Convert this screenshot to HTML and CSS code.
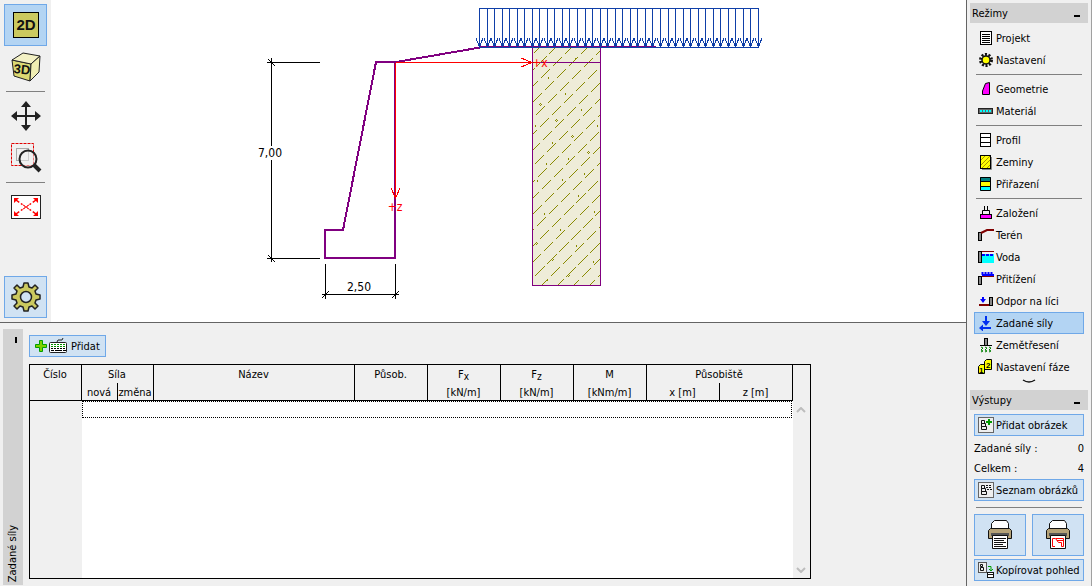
FILE: index.html
```html
<!DOCTYPE html>
<html lang="cs">
<head>
<meta charset="utf-8">
<title>Zadané síly</title>
<link rel="stylesheet" href="styles.css">
</head>
<body>
<main class="main">
  <section class="view">
    <div class="toolbar">
      <button class="tool active" aria-label="2D"><svg width="30" height="30"><rect x="2.500" y="2.500" width="25" height="25" fill="#cbc95f" stroke="#000"/><text class="icon-text" x="15" y="20" text-anchor="middle">2D</text></svg></button>
      <button class="tool" aria-label="3D"><svg width="34" height="34" stroke="#222" stroke-linejoin="round"><path d="M3 10L22 14L21 31L5 26Z" fill="#dcd973"/><path d="M3 10L14 3L31 6L22 14Z" fill="#f3f1c5"/><path d="M22 14L31 6L30 22L21 31Z" fill="#efedb2"/><text class="icon-text cube-text" x="13" y="24" text-anchor="middle" stroke="none" transform="rotate(6 13 20)">3D</text></svg></button>
      <hr class="tool-line">
      <button class="tool" aria-label="Posun"><svg width="30" height="30"><path d="M15 4V26M4 15H26" stroke="#222" stroke-width="2"/><path d="M15 0L20 6H10ZM15 30L20 24H10ZM0 15L6 10V20ZM30 15L24 10V20Z" fill="#222"/></svg></button>
      <button class="tool" aria-label="Lupa"><svg width="32" height="32" fill="none"><rect x="1.500" y="1.500" width="22" height="22" stroke="#e00000" stroke-dasharray="3 1"/><rect x="6.500" y="6.500" width="12" height="12" stroke="#aaa"/><circle cx="18" cy="17" r="8.500" fill="#f0f0f0" fill-opacity=".5" stroke="#222" stroke-width="2"/><path d="M24 23L30 29" stroke="#222" stroke-width="4"/></svg></button>
      <hr class="tool-line">
      <button class="tool" aria-label="Celý pohled"><svg width="30" height="24"><rect x=".5" y=".5" width="29" height="23" fill="#fff" stroke="#222"/><path d="M5 5L12 10M25 5L18 10M5 19L12 14M25 19L18 14" stroke="#f00" stroke-width="1.500" stroke-dasharray="4 2 2 2"/><path d="M3 3H8L3 8ZM27 3H22L27 8ZM3 21H8L3 16ZM27 21H22L27 16Z" fill="#f00"/><path d="M12 10l2 1v2l-2 1M18 10l-2 1v2l2 1M14 12h2" stroke="#f00" fill="none"/></svg></button>
      <button class="tool gear" aria-label="Nastavení zobrazení"><svg width="32" height="32" viewBox="-16 -16 32 32"><path d="M-3-10L-2-14H2L3-10L6-9L9-12L12-9L9-6L10-3L14-2V2L10 3L9 6L12 9L9 12L6 9L3 10L2 14H-2L-3 10L-6 9L-9 12L-12 9L-9 6L-10 3L-14 2V-2L-10-3L-9-6L-12-9L-9-12L-6-9Z" fill="#cbc95f" stroke="#222" stroke-width="1.500" stroke-linejoin="round"/><circle r="5.500" fill="#d0e2f3" stroke="#222" stroke-width="1.500"/></svg></button>
    </div>
    <svg class="canvas" viewBox="51 0 915 322" preserveAspectRatio="xMinYMin meet" shape-rendering="crispEdges" fill="none">
      <clipPath id="soil-clip"><rect x="533" y="48" width="67" height="237"/></clipPath>
      <rect x="532.500" y="47.500" width="68" height="238" fill="#eeecd8"/>
      <g clip-path="url(#soil-clip)"><g id="hatch" class="soil"></g></g>
      <path d="M532.500 47V285.500H600.500V47M532.500 62.500H600.500" stroke="#800080"/>
      <path d="M396 62L483 47H656M376 62H395V258H325V230H343Z" stroke="#800080" stroke-width="2"/>
      <path id="load" class="load"></path>
      <path d="M395.500 62.500H532M521 58L532 62.500L521 67M395.500 62.500V198M391 188L395.500 198L400 188" stroke="#f00"/>
      <path d="M271.500 58V146M271.500 160V262M267 62.500H320M267 258.500H320M268 59L275 66M268 255L275 262M325.500 264V299M395.500 264V299M322 294.500H399M322 298L329 291M392 298L399 291" stroke="#000"/>
      <g class="dims"><text x="270" y="157">7,00</text><text x="359" y="291">2,50</text></g>
      <g class="axes"><text x="540" y="67">+x</text><text x="395" y="211">+z</text></g>
    </svg>
  </section>

  <section class="panel">
    <div class="tab"><span class="tab-mark"></span><span class="tab-text">Zadané síly</span></div>
    <div class="work">
      <button class="btn add"><svg width="34" height="16"><path d="M5.500 2.500h3v4h4v3h-4v4h-3v-4h-4v-3h4Z" fill="#7fd000" stroke="#00a000"/><rect x="15.500" y="4.500" width="17" height="10" rx="1" fill="#fff" stroke="#222"/><path d="M17 6.500h15M17 8.500h15" stroke="#009000" stroke-dasharray="2 1"/><path d="M17 10.500h15" stroke="#000" stroke-dasharray="2 1"/><path d="M17 12.500h3m1 0h7m1 0h3" stroke="#000"/><path d="M23 4L24 2H28L29 0" fill="none" stroke="#222"/></svg>Přidat</button>
      <div class="grid">
        <table>
          <colgroup><col class="c-num"><col class="c-half"><col class="c-half"><col class="c-name"><col span="6" class="c-val"></colgroup>
          <thead>
            <tr><th rowspan="2">Číslo</th><th colspan="2" class="up">Síla</th><th rowspan="2">Název</th><th rowspan="2">Působ.</th><th class="up">F<sub>x</sub></th><th class="up">F<sub>z</sub></th><th class="up">M</th><th colspan="2" class="up">Působiště</th></tr>
            <tr><th>nová</th><th>změna</th><th>[kN/m]</th><th>[kN/m]</th><th>[kNm/m]</th><th>x [m]</th><th>z [m]</th></tr>
          </thead>
          <tbody>
            <tr class="cursor"><td class="num"></td><td colspan="9"><div class="focus"></div></td></tr>
            <tr><td class="num"></td><td colspan="9"></td></tr>
          </tbody>
        </table>
        <div class="scroll">
          <svg width="10" height="6"><path d="M1 5L5 1L9 5" /></svg>
          <svg width="10" height="6"><path d="M1 1L5 5L9 1" /></svg>
        </div>
      </div>
    </div>
  </section>
</main>

<aside class="side">
  <h2 class="head">Režimy<span class="min"></span></h2>
  <nav class="modes">
    <button class="mode"><svg width="16" height="16"><rect x="2.500" y="1.500" width="11" height="13" fill="#fff" stroke="#000"/><path d="M4 4.500h8M4 6.500h8M4 8.500h8M4 10.500h8M4 12.500h8" stroke="#000"/></svg>Projekt</button>
    <button class="mode"><svg width="16" height="16"><circle cx="8" cy="8" r="5.500" fill="none" stroke="#111" stroke-width="3" stroke-dasharray="2 1.460"/><circle cx="8" cy="8" r="4" fill="#ff0" stroke="#111" stroke-width="1.500"/></svg>Nastavení</button>
    <hr>
    <button class="mode"><svg width="16" height="16"><path d="M4.500 13.500V10L7.500 2.500L11.500 1.500V13.500Z" fill="#f0f" stroke="#000"/></svg>Geometrie</button>
    <button class="mode"><svg width="16" height="16"><rect x=".5" y="5.500" width="14" height="5" fill="#666" stroke="#222"/><path d="M2 8h12" stroke="#0ff" stroke-width="2" stroke-dasharray="2 1"/></svg>Materiál</button>
    <hr>
    <button class="mode"><svg width="16" height="16"><rect x="2.500" y="1.500" width="10" height="13" fill="#fff" stroke="#000"/><path d="M2 5.500h11M2 10.500h11" stroke="#000"/></svg>Profil</button>
    <button class="mode"><svg width="16" height="16"><path d="M4 15.500h9.500V3" fill="none" stroke="#888"/><rect x="2.500" y="1.500" width="10" height="13" fill="#ff0" stroke="#000"/><path d="M3 6L7 2M3 11L12 2M4 14L12 6M9 14L12 11" stroke="#a89000"/></svg>Zeminy</button>
    <button class="mode"><svg width="16" height="16"><rect x="2" y="1" width="11" height="5" fill="#008080"/><rect x="2" y="6" width="11" height="4" fill="#ff0"/><rect x="2" y="10" width="11" height="5" fill="#0ff"/><path d="M2.500 1.500h10v13h-10ZM2 5.500h11M2 10.500h11" fill="none" stroke="#000"/></svg>Přiřazení</button>
    <hr>
    <button class="mode"><svg width="16" height="16"><path d="M6.500 1V5.500H4.500V9M9.500 1V5.500H11.500V9M6 5.500h4" fill="none" stroke="#000"/><rect x="2.500" y="9.500" width="11" height="4" fill="#f0f" stroke="#000"/></svg>Založení</button>
    <button class="mode"><svg width="16" height="16"><rect x=".5" y="5.500" width="3" height="8" fill="#888" stroke="#000"/><path d="M3 6L9 3H16" fill="none" stroke="#800000" stroke-width="2"/></svg>Terén</button>
    <button class="mode"><svg width="16" height="16"><rect x="4" y="5" width="12" height="9" fill="#0ff"/><path d="M4 6h12" stroke="#00f" stroke-width="2" stroke-dasharray="3 1"/><path d="M3 2.500h13" stroke="#800000"/><rect x=".5" y="2.500" width="3" height="11" fill="#888" stroke="#000"/></svg>Voda</button>
    <button class="mode"><svg width="16" height="16"><path d="M4 4h12M4.500 1v3M7.500 1v3M10.500 1v3M13.500 1v3" stroke="#00f" stroke-width="2"/><path d="M3 5.500h13" stroke="#800000"/><rect x=".5" y="5.500" width="3" height="8" fill="#888" stroke="#000"/></svg>Přitížení</button>
    <button class="mode"><svg width="16" height="16"><path d="M5 4v4" stroke="#00f" stroke-width="2"/><path d="M2 6h6L5 10Z" fill="#00f"/><path d="M1 12h10" stroke="#800000" stroke-width="2"/><rect x="11.500" y="4.500" width="3" height="8" fill="#888" stroke="#000"/></svg>Odpor na líci</button>
    <button class="mode active"><svg width="16" height="16"><path d="M8 1v8M5 13h8" stroke="#0030f0" stroke-width="2"/><path d="M4 6h8L8 11ZM5 9.500v7L1 13Z" fill="#0030f0"/></svg>Zadané síly</button>
    <button class="mode"><svg width="16" height="16"><path d="M2 8.500h12" stroke="#000"/><rect x="6.500" y="1.500" width="3" height="7" fill="#888" stroke="#000"/><path d="M3 10l2 1-2 2 2 1-2 1M7 10l2 1-2 2 2 1-2 1M11 10l2 1-2 2 2 1-2 1" fill="none" stroke="#008000"/></svg>Zemětřesení</button>
    <button class="mode"><svg width="16" height="16"><path d="M.5 14.500v-7l2-2h4v9Z M6.500 10.500v-8l2-2h5v10Z" fill="#ff0" stroke="#000"/><text class="tiny" x="1" y="14">1</text><text class="tiny" x="8" y="9">2</text></svg>Nastavení fáze</button>
    <button class="more" aria-label="Další"><svg width="14" height="5"><path d="M1 1Q4 3 7 3Q10 3 13 1" fill="none" stroke="#111" stroke-width="1.500"/></svg></button>
  </nav>
  <h2 class="head">Výstupy<span class="min"></span></h2>
  <div class="outputs">
    <button class="btn"><svg width="16" height="16"><rect x=".5" y=".5" width="15" height="15" fill="#eee" stroke="#666"/><path d="M3.500 3.500h3v3h-3ZM3.500 6.500v3h4v-3h-4M3.500 9.500v3h5v-3h-5" fill="none" stroke="#111"/><path d="M11 2v6M8 5h6" stroke="#009a00" stroke-width="2"/></svg>Přidat obrázek</button>
    <div class="counts">
      <p class="count"><span>Zadané síly :</span><span>0</span></p>
      <p class="count"><span>Celkem :</span><span>4</span></p>
    </div>
    <button class="btn"><svg width="16" height="16"><rect x=".5" y=".5" width="15" height="15" fill="#eee" stroke="#666"/><path d="M3.500 3.500h3v3h-3ZM3.500 6.500v3h4v-3h-4M3.500 9.500v3h5v-3h-5" fill="none" stroke="#111"/><path d="M8 3.500h6M8 5.500h6M9 7.500h5" stroke="#111" stroke-dasharray="2 1"/></svg>Seznam obrázků</button>
    <hr>
    <div class="prints">
      <button class="btn print" aria-label="Tisk textu"><svg width="26" height="30"><path d="M4.500 10V3.500L7.500.5H19.500L21.500 3.500V10" fill="#fff" stroke="#111"/><path d="M3.500 8.500H22.500L24.500 10.500V18.500H1.500V10.500Z" fill="#b5a277" stroke="#111"/><path d="M4 14.500H22" stroke="#555" stroke-width="3"/><path d="M5.500 15.500H20.500V28.500H5.500Z" fill="#fff" stroke="#111"/><path d="M7 18.500h12M7 20.500h10M7 22.500h12M7 24.500h9M7 26.500h12" stroke="#111"/></svg></button>
      <button class="btn print" aria-label="Tisk obrázku"><svg width="26" height="30"><path d="M4.500 10V3.500L7.500.5H19.500L21.500 3.500V10" fill="#fff" stroke="#111"/><path d="M3.500 8.500H22.500L24.500 10.500V18.500H1.500V10.500Z" fill="#b5a277" stroke="#111"/><path d="M4 14.500H22" stroke="#555" stroke-width="3"/><path d="M5.500 15.500H20.500V28.500H5.500Z" fill="#fff" stroke="#111"/><path d="M10 18.500H7.500V26.500H10M10.500 18.500H18.500V26.500H16.500V22.500H13.500ZM12 20.500h6" fill="none" stroke="#f00"/></svg></button>
    </div>
    <button class="btn"><svg width="16" height="16"><rect x=".5" y=".5" width="8" height="10" fill="#eee" stroke="#555"/><path d="M2.500 2.500h2v2h-2ZM2.500 5.500h3v3h-3Z" fill="none" stroke="#111"/><path d="M10 4.500h3V9M11 7l2 2 2-2" fill="none" stroke="#009a00"/><rect x="9.500" y="10.500" width="6" height="5" fill="#fff" stroke="#111"/><path d="M9 12.500h7" stroke="#111"/></svg>Kopírovat pohled</button>
  </div>
</aside>
<script src="drawing.js"></script>
</body>
</html>
```
FILE: drawing.js
```js
// Surcharge arrows: evenly spaced, snapped to whole pixels.
var load = "M479 8.500H759M479 47.500H759";
for (var i = 0; i < 38; i++) {
  var x = Math.round(479 + i * 7.54) + 0.5;
  load += "M" + x + " 8V47M" + (x - 3.5) + " 38L" + x + " 47L" + (x + 3.5) + " 38";
}
document.getElementById("load").setAttribute("d", load);

// Soil hatch: dashed diagonals with scattered grains.
var hatch = "";
for (var y = 54; y < 370; y += 16) {
  hatch += '<path d="M532.5 ' + (y + 0.5) + 'l70 -70" stroke-dasharray="13 4" stroke-dashoffset="' + (y * 5) % 17 + '"/>';
}
var grains = [[548, 77], [575, 58], [565, 93], [535, 125], [581, 109], [597, 125], [552, 142], [568, 158], [546, 163], [584, 173], [562, 179], [537, 180], [578, 195], [594, 211], [544, 213], [560, 229], [576, 245], [593, 261], [547, 279]];
grains.forEach(function (p) { hatch += '<path d="M' + (p[0] + 0.5) + " " + p[1] + 'v2"/>'; });
[[540, 104], [556, 120], [572, 136], [588, 152], [536, 243], [552, 259], [568, 275]].forEach(function (p) {
  hatch += '<path d="M' + (p[0] - 0.5) + " " + (p[1] + 0.5) + 'l1 -1l1 1l-1 1z"/>';
});
document.getElementById("hatch").innerHTML = hatch;
```
FILE: styles.css
```css
* { box-sizing: border-box; }
body {
  margin: 0;
  height: 100vh;
  display: flex;
  overflow: hidden;
  background: #f0f0f0;
  color: #000;
  font: 11px/18px "DejaVu Sans Condensed", "DejaVu Sans", sans-serif;
  font-stretch: condensed;
}
button {
  margin: 0;
  padding: 0;
  border: 1px solid transparent;
  background: none;
  color: inherit;
  font: inherit;
}
svg { display: block; flex: none; }
hr { border: 0; height: 1px; background: #808080; }

.main { flex: 1; min-width: 0; display: flex; flex-direction: column; }
.view { flex: 1; min-height: 0; display: flex; }
.toolbar {
  flex: none;
  width: 51px;
  padding: 4px;
  display: flex;
  flex-direction: column;
}
.tool {
  width: 43px;
  height: 42px;
  display: flex;
  align-items: center;
  justify-content: center;
}
.tool.active { background: #b3d4f3; border-color: #6fa8e8; }
.tool.gear { margin-top: auto; background: #d0e2f3; border-color: #6fa8e8; }
.tool-line { width: 39px; margin: 3px 2px; flex: none; }
.icon-text { font: bold 15px "Liberation Sans", sans-serif; fill: #111; }
.cube-text { font-size: 13px; }
.tiny { font: bold 8px "Liberation Sans", sans-serif; }

.canvas { flex: 1; min-width: 0; height: 100%; background: #fff; }
.load { stroke: #0f3fa8; }
.soil { stroke: #8a8a00; }
.dims { fill: #000; font-size: 12px; text-anchor: middle; }
.axes { fill: #f00; font-size: 12px; text-anchor: middle; }

.panel {
  flex: none;
  height: 264px;
  border-top: 1px solid #646464;
  padding: 6px 3px 1px;
  display: flex;
}
.tab {
  width: 20px;
  background: #d2d2d2;
  display: flex;
  flex-direction: column;
  align-items: center;
  justify-content: space-between;
  padding: 8px 0 3px;
}
.tab-mark { width: 2px; height: 6px; margin-left: 6px; background: #000; }
.tab-text { writing-mode: vertical-rl; transform: rotate(180deg); }
.work {
  padding: 6px 6px;
  display: flex;
  flex-direction: column;
  align-items: flex-start;
}
.btn {
  height: 22px;
  padding: 2px 3px 0;
  display: flex;
  align-items: center;
  gap: 2px;
  background: #d0e2f3;
  border-color: #6fa8e8;
  white-space: nowrap;
}
.btn svg, .mode svg { margin-top: -2px; }
.add { padding: 2px 5px 0 4px; gap: 3px; margin-bottom: 7px; }

.grid { flex: 1; display: flex; border: 1px solid #000; background: #fff; }
table { width: 763px; height: 100%; table-layout: fixed; border-collapse: separate; border-spacing: 0; }
.c-num { width: 52px; }
.c-half { width: 36px; }
.c-name { width: 201px; }
.c-val { width: 73px; }
th {
  height: 18px;
  padding: 2px 1px 0 0;
  background: #f0f0f0;
  border-right: 1px solid #000;
  border-bottom: 1px solid #000;
  font-weight: normal;
  line-height: 15px;
  vertical-align: top;
  white-space: nowrap;
}
th.up { border-bottom: 0; }
sub { font-size: 10px; line-height: 1px; vertical-align: -2px; }
td { padding: 0; }
.num { background: #f0f0f0; }
.cursor td { height: 17px; }
.focus { height: 17px; margin-right: 1px; border: 1px dotted #000; }
.scroll {
  width: 17px;
  background: #f0f0f0;
  padding: 42px 3px 5px;
  display: flex;
  flex-direction: column;
  justify-content: space-between;
}
.scroll path { fill: none; stroke: #bdbdbd; stroke-width: 2; }

.side {
  flex: none;
  width: 126px;
  padding: 3px 3px 0;
  border-left: 1px solid #646464;
  border-right: 1px solid #a0a0a0;
}
.head {
  height: 20px;
  margin: 0;
  padding: 2px 8px 0 2px;
  display: flex;
  align-items: center;
  justify-content: space-between;
  background: #d2d2d2;
  font-size: 11px;
  font-weight: normal;
}
.min { width: 6px; height: 2px; margin-top: 4px; background: #000; }
.modes { padding: 4px 4px 0; }
.side hr { margin: 3px 2px; }
.mode {
  width: 100%;
  height: 22px;
  padding: 2px 3px 0;
  display: flex;
  align-items: center;
  gap: 2px;
  white-space: nowrap;
}
.mode.active { background: #b3d4f3; border-color: #6fa8e8; }
.more { width: 100%; height: 12px; display: flex; justify-content: center; }
.outputs { padding: 4px 4px 0; }
.outputs .btn { width: 100%; }
.outputs hr { margin: 6px 2px; }
.counts { padding: 3px 0 0; }
.count { height: 20px; margin: 0; display: flex; align-items: center; justify-content: space-between; }
.prints { display: flex; gap: 6px; margin-bottom: 3px; }
.outputs .print { flex: 1; height: 42px; justify-content: center; }
```
